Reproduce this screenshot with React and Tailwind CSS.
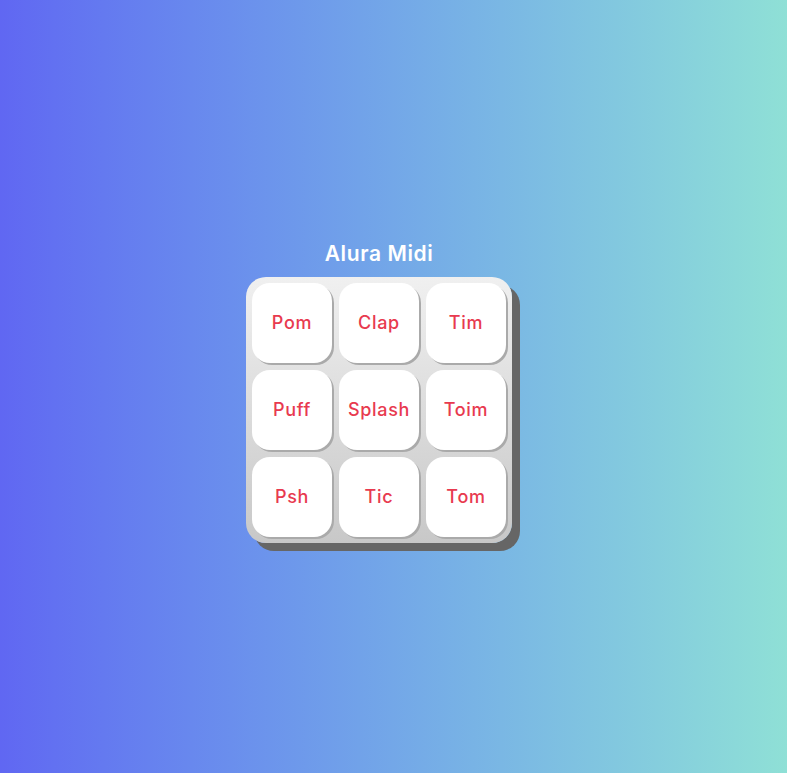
const keys = ["Pom", "Clap", "Tim", "Puff", "Splash", "Toim", "Psh", "Tic", "Tom"];

export default function App() {
  return (
    <div
      className="flex h-screen w-full flex-col items-center justify-center bg-linear-to-r from-[#6067f2] to-[#8fe0d6] pr-[29px] pt-[10px]"
      style={{ fontFamily: "Inter, 'Noto Sans', sans-serif" }}
    >
      <h1 className="mb-[10px] text-[21px] font-semibold leading-[26px] tracking-[0.6px] text-white">
        Alura Midi
      </h1>
      <section className="grid grid-cols-[80px_80px_80px] gap-[7px] rounded-[20px] bg-linear-to-b from-[#f0f0f0] to-[#c8c8c8] p-[6px] shadow-[8px_8px_0_#666]">
        {keys.map((k) => (
          <button
            key={k}
            className="flex h-[80px] w-[80px] items-center justify-center rounded-[18px] bg-white text-[18px] font-medium tracking-[0.7px] text-[#e83a4f] shadow-[2px_2px_0_#aaa]"
          >
            {k}
          </button>
        ))}
      </section>
    </div>
  );
}
